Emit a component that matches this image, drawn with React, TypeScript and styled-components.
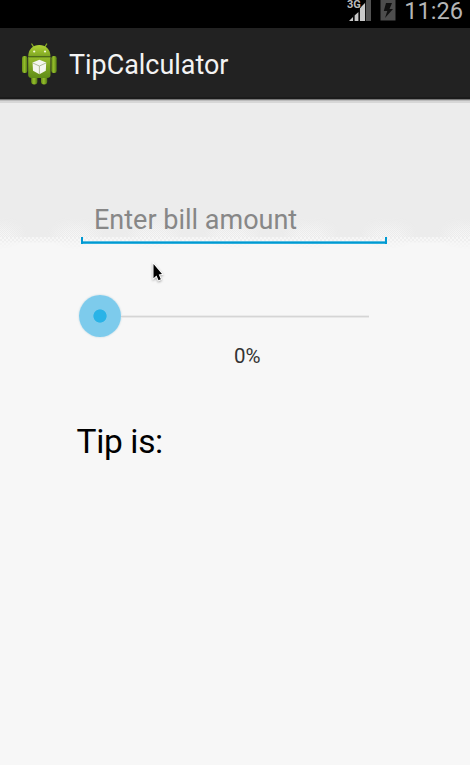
import React from "react";
import styled, { createGlobalStyle } from "styled-components";

const GlobalStyle = createGlobalStyle`
  * { box-sizing: border-box; }
  html, body { margin: 0; padding: 0; background: #f7f7f7; }
`;

const Screen = styled.div`
  width: 470px;
  height: 765px;
  overflow: hidden;
  display: flex;
  flex-direction: column;
  font-family: Roboto, "Liberation Sans", sans-serif;
  background: #f7f7f7;
`;

const StatusBar = styled.header`
  height: 28px;
  flex: none;
  display: flex;
  justify-content: flex-end;
  align-items: flex-start;
  padding-right: 7px;
  background: #000;
`;

const StatusIcons = styled.svg`
  display: block;
  flex: none;
  margin-right: 8px;
`;

const Clock = styled.time`
  color: #b5b5b5;
  font-size: 23.6px;
  line-height: 22px;
  height: 22px;
  white-space: nowrap;
`;

const ActionBar = styled.div`
  height: 75px;
  flex: none;
  display: flex;
  align-items: flex-start;
  padding: 14px 0 0 20px;
  background: linear-gradient(
    to bottom,
    #222 0 69px,
    #1b1b1b 69px 71px,
    #777 71px 72px,
    #bbb 72px 73px,
    #d6d6d6 73px 75px
  );
`;

const AppIcon = styled.svg`
  display: block;
  flex: none;
`;

const Title = styled.h1`
  margin: 6px 0 0 10px;
  color: #f3f3f3;
  font-size: 26.9px;
  font-weight: 400;
  line-height: 34px;
  white-space: nowrap;
`;

const Content = styled.main`
  position: relative;
  isolation: isolate;
  flex: 1;
  display: flex;
  flex-direction: column;
  padding: 94px 83px 0 77px;
  background: linear-gradient(to bottom, #ececec 0 134px, #f2f2f2 135px 138px, #f7f7f7 139px);

  /* Dithered transition between the two background greys. */
  &::before,
  &::after {
    content: "";
    position: absolute;
    left: 0;
    right: 0;
    z-index: -1;
  }
  &::before {
    top: 115px;
    height: 20px;
    background: repeating-conic-gradient(#f8f8f8 0 25%, #ececec 0 50%) 0 0 / 2px 2px;
    mask:
      radial-gradient(ellipse 30px 20px at 50% 80%, #000 0 35%, #0006 75%, #0000 100%) -41px 0 / 78px 20px repeat-x,
      linear-gradient(#0003, #000c 85%);
    mask-composite: intersect;
  }
  &::after {
    top: 134px;
    height: 12px;
    background: repeating-conic-gradient(#ededed 0 25%, #f7f7f7 0 50%) 0 0 / 4px 4px;
    mask:
      linear-gradient(#000c 0 4px, #0000 6px),
      radial-gradient(ellipse 28px 12px at 50% 0, #0006 60%, #0000 100%) -41px 0 / 78px 12px repeat-x;
  }
`;

const BillField = styled.label`
  display: block;
  width: 306px;
  height: 47px;
  margin-left: 4px;
  padding: 6px 0 0 13px;
  background:
    linear-gradient(#0099d2, #0099d2) 0 100% / 2px 7px no-repeat,
    linear-gradient(#0099d2, #0099d2) 100% 100% / 2px 7px no-repeat,
    linear-gradient(#55bbdf 0 1px, #0099d2 1px 2px, #30b0dc 2px) 0 100% / 100% 3px no-repeat;
`;

const BillInput = styled.input`
  display: block;
  width: 280px;
  height: 34px;
  padding: 0;
  border: 0;
  outline: 0;
  background: transparent;
  font: 400 27px/34px Roboto, "Liberation Sans", sans-serif;
  color: #222;
  &::placeholder { color: #878787; opacity: 1; }
`;

const Slider = styled.div`
  display: flex;
  align-items: center;
  width: 292px;
  height: 46px;
  margin-top: 49px;
`;

const Thumb = styled.div`
  flex: none;
  width: 42px;
  height: 42px;
  margin-left: 2px;
  border-radius: 50%;
  background: radial-gradient(circle, #29b3e7 0 6.2px, #7dcbec 7px);
  box-shadow: 0 0 2px #b4cfda;
`;

const Track = styled.div`
  flex: 1;
  height: 3px;
  background: linear-gradient(#ebebeb 0 1px, #d5d5d5 1px 2px, #e8e8e8 2px);
`;

const Percent = styled.output`
  display: block;
  margin: 4px 0 0 157px;
  font-size: 20.5px;
  line-height: 26px;
  color: #333;
`;

const TipLabel = styled.p`
  margin: 52px 0 0 -0.5px;
  font-size: 33.5px;
  letter-spacing: -0.35px;
  line-height: 42px;
  color: #000;
`;

const Pointer = styled.svg`
  position: absolute;
  left: 149px;
  top: 259px;
  pointer-events: none;
  filter: drop-shadow(0 1px 1px #0005);
`;

function StatusGlyphs() {
  return (
    <StatusIcons width="50" height="24" viewBox="346 0 50 24" aria-hidden="true">
      <path d="M349 21 353 17V21ZM354.5 21V15.5L358.5 12V21ZM360 21V10L364.5 6V21Z" fill="#c8c8c8" />
      <path d="M366 0H371V21H366Z" fill="#525252" />
      <path d="M360 8 365 3V21H360Z" fill="#c8c8c8" />
      <path d="M353.8 14V21M359.3 9V21M365.5 2V21" stroke="#111" />
      <text x="347" y="8" fontFamily="Roboto, sans-serif" fontWeight="700" fontSize="11" fill="#bcbcbc" stroke="#000" strokeWidth="1.5" paintOrder="stroke">3G</text>
      <path d="M380.5 0H395.5V20.5H380.5Z" fill="#4d4d4d" />
      <path d="M386 3H392L389.5 9H393L385 18 387.3 11H383.8Z" fill="#111" />
    </StatusIcons>
  );
}

function AndroidIcon() {
  return (
    <AppIcon width="39" height="44" viewBox="20 42 39 44" aria-hidden="true">
      <defs>
        <linearGradient id="green" x1="0" x2="0" y1="0" y2="1">
          <stop offset="0" stopColor="#b1d335" />
          <stop offset="1" stopColor="#7da522" />
        </linearGradient>
        <linearGradient id="limb" x1="0" x2="1" y1="0" y2="0">
          <stop offset="0" stopColor="#688f17" />
          <stop offset="0.45" stopColor="#94bd2b" />
          <stop offset="1" stopColor="#537a13" />
        </linearGradient>
        <linearGradient id="torso" x1="0" x2="0" y1="0" y2="1">
          <stop offset="0" stopColor="#95bb2c" />
          <stop offset="1" stopColor="#608c16" />
        </linearGradient>
      </defs>
      <path d="M31.8 44 34.3 48M46.7 44 44.2 48" stroke="#86ad23" strokeWidth="1.3" strokeLinecap="round" />
      <rect x="22" y="56" width="5.4" height="17" rx="2.2" fill="url(#limb)" />
      <rect x="51.3" y="56" width="5.4" height="17" rx="2.2" fill="url(#limb)" />
      <rect x="31.2" y="74" width="6.2" height="10.5" rx="3" fill="url(#limb)" />
      <rect x="41" y="74" width="6.2" height="10.5" rx="3" fill="url(#limb)" />
      <path d="M28.2 57H50.5V75Q50.5 78 47 78H31.7Q28.2 78 28.2 75Z" fill="url(#torso)" />
      <path d="M28.2 56.5C28.2 49.2 33 45 39.3 45S50.5 49.2 50.5 56.5Z" fill="url(#green)" />
      <path d="M28.7 57H50" stroke="#4d7413" strokeWidth="0.8" />
      <circle cx="34.2" cy="51.5" r="1.1" fill="#f5fbda" />
      <circle cx="45" cy="51.5" r="1.1" fill="#f5fbda" />
      <path d="M39.4 59.8 46.2 62.6 45.8 70.8 39.4 74.3 33 70.8 32.6 62.6Z" fill="#f4f6ef" />
      <path d="M32.8 63 39.4 66 46 63M39.4 66V74" fill="none" stroke="#a9b48f" strokeWidth="0.9" />
    </AppIcon>
  );
}

export default function App() {
  return (
    <>
      <GlobalStyle />
      <Screen>
        <StatusBar>
          <StatusGlyphs />
          <Clock>11:26</Clock>
        </StatusBar>
        <ActionBar>
          <AndroidIcon />
          <Title>TipCalculator</Title>
        </ActionBar>
        <Content>
          <BillField>
            <BillInput placeholder="Enter bill amount" aria-label="Enter bill amount" />
          </BillField>
          <Slider>
            <Thumb />
            <Track />
          </Slider>
          <Percent>0%</Percent>
          <TipLabel>Tip is:</TipLabel>
        </Content>
        <Pointer width="18" height="26" viewBox="149 259 18 26" aria-hidden="true">
          <path d="M153.5 264V278.2L156.5 275.5 158.5 280.2 160.8 279.2 158.7 274.5 162 274Z" fill="#000" stroke="#fff" strokeWidth="1.8" paintOrder="stroke" />
        </Pointer>
      </Screen>
    </>
  );
}
